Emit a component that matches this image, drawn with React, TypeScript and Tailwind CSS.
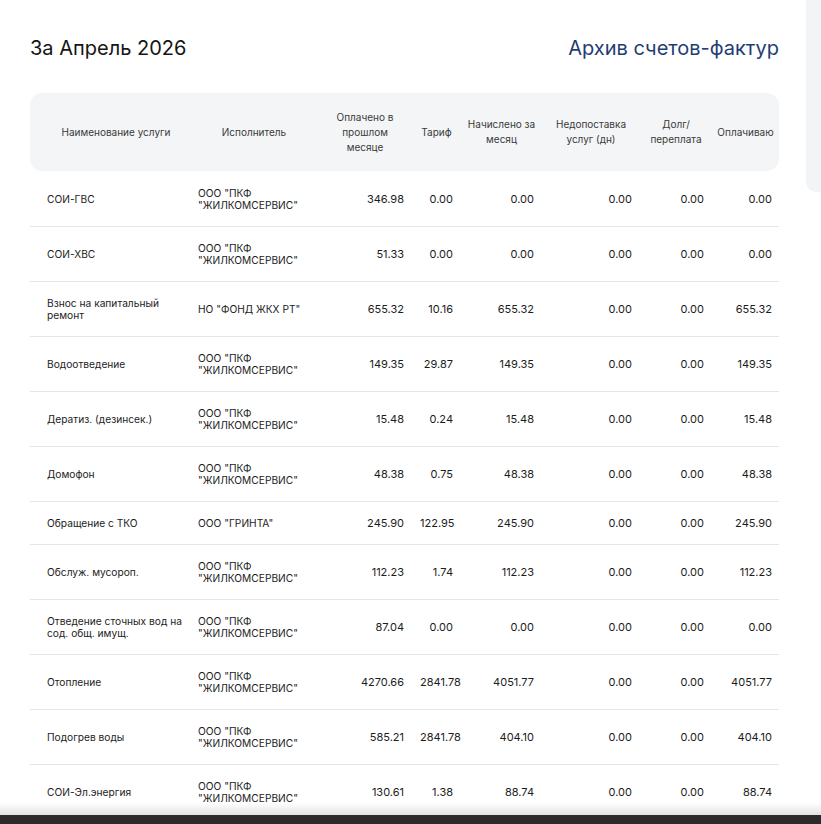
import React from "react";

const rows = [
  { name: "СОИ-ГВС", org: "ООО \"ПКФ \"ЖИЛКОМСЕРВИС\"", prev: "346.98", tariff: "0.00", charged: "0.00", under: "0.00", debt: "0.00", pay: "0.00" },
  { name: "СОИ-ХВС", org: "ООО \"ПКФ \"ЖИЛКОМСЕРВИС\"", prev: "51.33", tariff: "0.00", charged: "0.00", under: "0.00", debt: "0.00", pay: "0.00" },
  { name: "Взнос на капитальный ремонт", org: "НО \"ФОНД ЖКХ РТ\"", prev: "655.32", tariff: "10.16", charged: "655.32", under: "0.00", debt: "0.00", pay: "655.32" },
  { name: "Водоотведение", org: "ООО \"ПКФ \"ЖИЛКОМСЕРВИС\"", prev: "149.35", tariff: "29.87", charged: "149.35", under: "0.00", debt: "0.00", pay: "149.35" },
  { name: "Дератиз. (дезинсек.)", org: "ООО \"ПКФ \"ЖИЛКОМСЕРВИС\"", prev: "15.48", tariff: "0.24", charged: "15.48", under: "0.00", debt: "0.00", pay: "15.48" },
  { name: "Домофон", org: "ООО \"ПКФ \"ЖИЛКОМСЕРВИС\"", prev: "48.38", tariff: "0.75", charged: "48.38", under: "0.00", debt: "0.00", pay: "48.38" },
  { name: "Обращение с ТКО", org: "ООО \"ГРИНТА\"", prev: "245.90", tariff: "122.95", charged: "245.90", under: "0.00", debt: "0.00", pay: "245.90" },
  { name: "Обслуж. мусороп.", org: "ООО \"ПКФ \"ЖИЛКОМСЕРВИС\"", prev: "112.23", tariff: "1.74", charged: "112.23", under: "0.00", debt: "0.00", pay: "112.23" },
  { name: "Отведение сточных вод на сод. общ. имущ.", org: "ООО \"ПКФ \"ЖИЛКОМСЕРВИС\"", prev: "87.04", tariff: "0.00", charged: "0.00", under: "0.00", debt: "0.00", pay: "0.00" },
  { name: "Отопление", org: "ООО \"ПКФ \"ЖИЛКОМСЕРВИС\"", prev: "4270.66", tariff: "2841.78", charged: "4051.77", under: "0.00", debt: "0.00", pay: "4051.77" },
  { name: "Подогрев воды", org: "ООО \"ПКФ \"ЖИЛКОМСЕРВИС\"", prev: "585.21", tariff: "2841.78", charged: "404.10", under: "0.00", debt: "0.00", pay: "404.10" },
  { name: "СОИ-Эл.энергия", org: "ООО \"ПКФ \"ЖИЛКОМСЕРВИС\"", prev: "130.61", tariff: "1.38", charged: "88.74", under: "0.00", debt: "0.00", pay: "88.74" },
];

// header text + horizontal padding per column
const headers = [
  { label: "Наименование услуги", pad: "pl-[16px] pr-[4px] rounded-l-[12px]" },
  { label: "Исполнитель", pad: "px-[4px]" },
  { label: "Оплачено в прошлом месяце", pad: "px-[16px]" },
  { label: "Тариф", pad: "px-[4px]" },
  { label: "Начислено за месяц", pad: "px-[4px]" },
  { label: "Недопоставка услуг (дн)", pad: "px-[4px]" },
  { label: "Долг/ переплата", pad: "px-[4px]" },
  { label: "Оплачиваю", pad: "px-[4px] rounded-r-[12px]" },
];

export default function App() {
  return (
    <div className="min-h-screen bg-white font-['Inter',sans-serif] text-[#1c1c1c]">
      {/* side panel edge */}
      <div className="fixed right-0 top-0 w-[15px] h-[192px] bg-[#f3f4f6] rounded-bl-[10px]" />

      <div className="pl-[30px] pt-[34px] w-[749px] box-content">
        {/* Title row */}
        <div className="flex items-center justify-between h-[28px]">
          <h2 className="text-[20px] leading-[28px] font-normal text-[#151515]">За Апрель 2026</h2>
          <a href="#" className="text-[20px] leading-[28px] text-[#1f3d73]">Архив счетов-фактур</a>
        </div>

        {/* Table */}
        <table className="mt-[31px] w-[749px] table-fixed border-collapse text-[11px]">
          <colgroup>
            <col className="w-[160px]" />
            <col className="w-[128px]" />
            <col className="w-[94px]" />
            <col className="w-[49px]" />
            <col className="w-[81px]" />
            <col className="w-[98px]" />
            <col className="w-[72px]" />
            <col className="w-[67px]" />
          </colgroup>
          <thead>
            <tr className="bg-[#f3f5f7]">
              {headers.map((h) => (
                <th
                  key={h.label}
                  className={`h-[78px] ${h.pad} align-middle text-center text-[10px] font-normal leading-[15px] text-[#3a3a3a]`}
                >
                  {h.label}
                </th>
              ))}
            </tr>
          </thead>
          <tbody>
            {rows.map((r, i) => {
              const pad = i === 0 ? "pt-[16px] pb-[15px]" : "py-[15px]";
              return (
                <tr key={r.name} className="border-b border-[#e3e5e8]">
                  <td className={`pl-[17px] pr-[8px] ${pad} text-[10.2px] leading-[12px] align-middle`}>{r.name}</td>
                  <td className={`pl-[8px] pr-[8px] ${pad} text-[10.2px] leading-[12px] align-middle`}>{r.org}</td>
                  <td className={`px-[8px] ${pad} leading-[12px] text-right`}>{r.prev}</td>
                  <td className={`px-[8px] ${pad} leading-[12px] text-right`}>{r.tariff}</td>
                  <td className={`px-[8px] ${pad} leading-[12px] text-right`}>{r.charged}</td>
                  <td className={`px-[8px] ${pad} leading-[12px] text-right`}>{r.under}</td>
                  <td className={`px-[8px] ${pad} leading-[12px] text-right`}>{r.debt}</td>
                  <td className={`px-[7px] ${pad} leading-[12px] text-right`}>{r.pay}</td>
                </tr>
              );
            })}
          </tbody>
        </table>
      </div>

      {/* bottom bar */}
      <div className="fixed bottom-0 left-0 right-0">
        <div className="h-[12px] bg-gradient-to-b from-transparent to-[#e2e2e2]" />
        <div className="h-[9px] bg-[#2b2b2b]" />
      </div>
    </div>
  );
}
